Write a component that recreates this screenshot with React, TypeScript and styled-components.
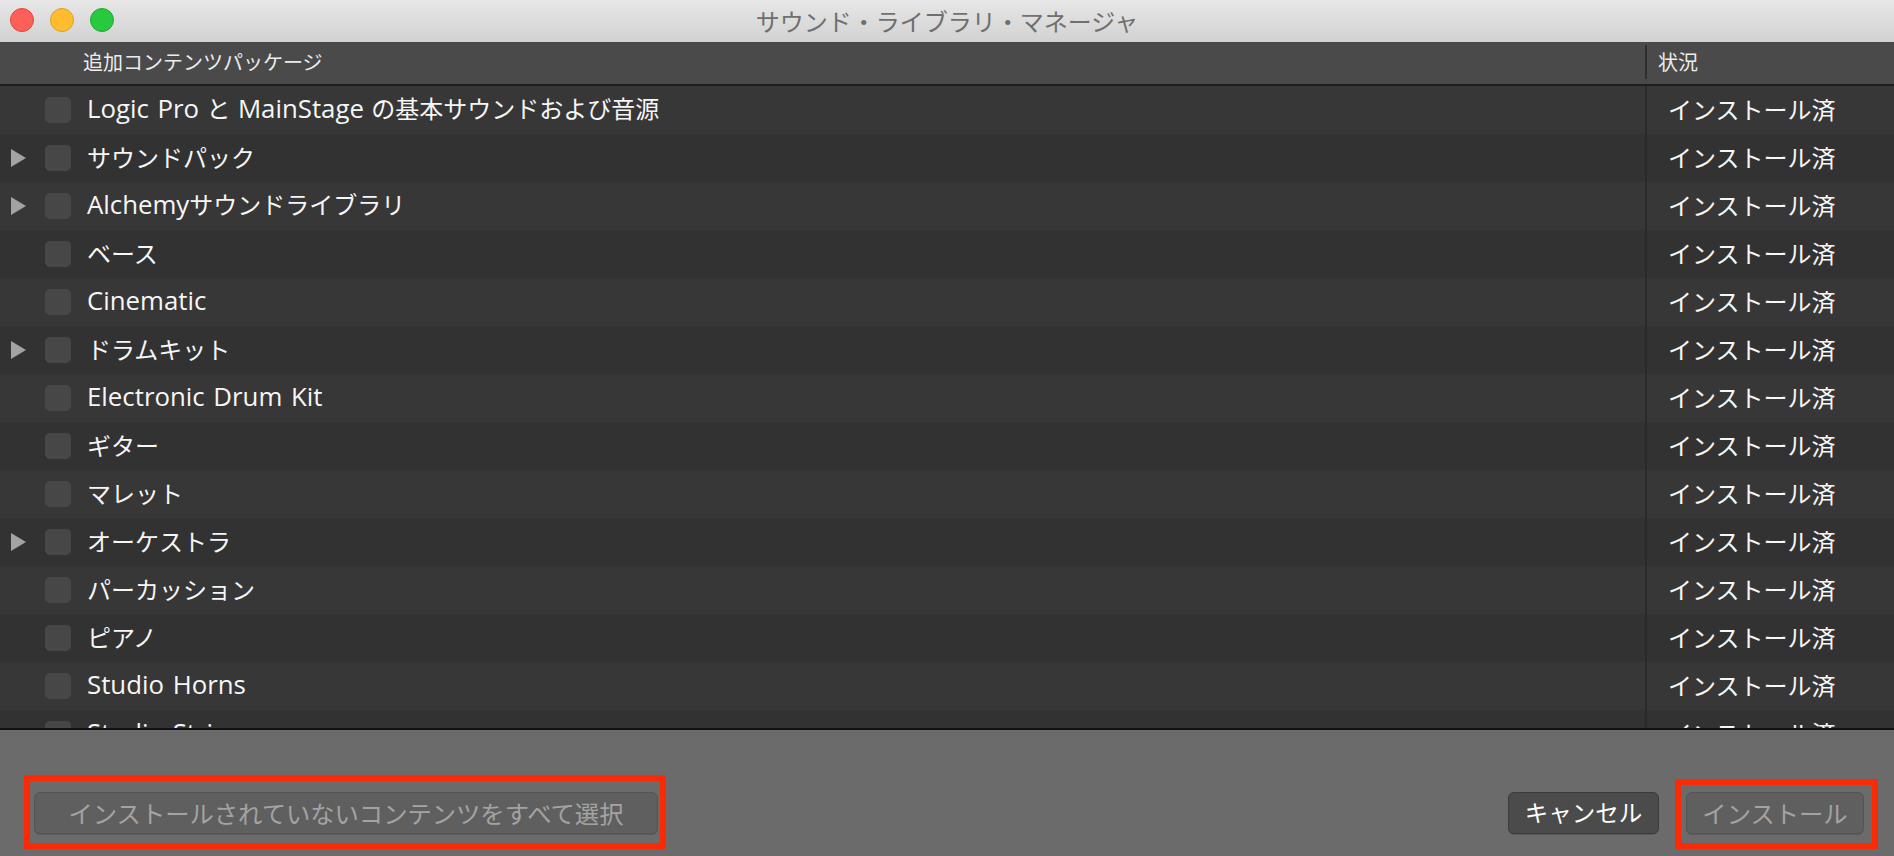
import React from "react";
import styled, { createGlobalStyle } from "styled-components";

const GlobalStyle = createGlobalStyle`
  html, body { margin: 0; padding: 0; background: #333; }
  body { font-family: "Open Sans", "Noto Sans CJK JP", sans-serif; }
  * { box-sizing: border-box; }
`;

const Window = styled.div`
  width: 1894px;
  height: 856px;
  display: flex;
  flex-direction: column;
  overflow: hidden;
  background: #333333;
`;

const TitleBar = styled.div`
  height: 42px;
  flex: 0 0 42px;
  display: flex;
  align-items: center;
  position: relative;
  background: linear-gradient(#e7e7e7, #d2d2d2);
`;

const Lights = styled.div`
  position: absolute;
  left: 10px;
  top: 8px;
  display: flex;
  gap: 16px;
`;

const Light = styled.div<{ $fill: string; $edge: string }>`
  width: 24px;
  height: 24px;
  border-radius: 50%;
  background: ${(p) => p.$fill};
  border: 1px solid ${(p) => p.$edge};
`;

const Title = styled.div`
  flex: 1;
  text-align: center;
  font-family: "Noto Sans CJK JP", sans-serif;
  font-size: 24px;
  color: #6f6f6f;
  line-height: 42px;
`;

const Header = styled.div`
  height: 44px;
  flex: 0 0 44px;
  display: grid;
  grid-template-columns: 1fr 249px;
  background: #4a4a4a;
  border-bottom: 2px solid #1e1e1e;
  color: #ececec;
  font-family: "Noto Sans CJK JP", sans-serif;
  font-size: 20px;
  padding-bottom: 3px;
`;

const HeaderCell = styled.div<{ $divider?: boolean; $pad: number }>`
  display: flex;
  align-items: center;
  padding-left: ${(p) => p.$pad}px;
  position: relative;
  ${(p) =>
    p.$divider
      ? `&::before { content: ""; position: absolute; left: 0; top: 3px; bottom: 2px; width: 2px; background: #2f2f2f; }`
      : ""}
`;

const List = styled.div`
  flex: 1;
  overflow: hidden;
  background: #333333;
`;

const Row = styled.div<{ $alt: boolean }>`
  height: 48px;
  display: grid;
  grid-template-columns: 1fr 249px;
  background: ${(p) => (p.$alt ? "#373737" : "#323232")};
  color: #f6f6f6;
  font-size: 24px;
`;

const NameCell = styled.div`
  display: flex;
  align-items: center;
  padding-left: 11px;
  padding-bottom: 4px;
  white-space: nowrap;
`;

const Label = styled.span`
  font-family: "Noto Sans CJK JP", sans-serif;
  white-space: pre;
  word-spacing: 2px;
`;

const Latin = styled.span`
  font-family: "Open Sans", sans-serif;
  font-size: 25.8px;
`;

const Disclosure = styled.div`
  width: 15px;
  height: 18px;
  flex: 0 0 15px;
  display: flex;
  align-items: center;
  margin-top: 4px;
`;

const Check = styled.div`
  width: 26px;
  height: 26px;
  flex: 0 0 26px;
  margin-left: 19px;
  margin-right: 16px;
  margin-top: 4px;
  border-radius: 5px;
  background: #474747;
`;

const StatusCell = styled.div`
  display: flex;
  align-items: center;
  padding-left: 21px;
  padding-bottom: 4px;
  border-left: 2px solid #2a2a2a;
  font-family: "Noto Sans CJK JP", sans-serif;
  white-space: nowrap;
`;

const Footer = styled.div`
  height: 128px;
  flex: 0 0 128px;
  background: #6b6b6b;
  border-top: 2px solid #111111;
  display: flex;
  align-items: flex-start;
  padding: 62px 30px 0 34px;
  gap: 27px;
`;

const Spacer = styled.div`
  flex: 1;
`;

const Marked = styled.div<{ $l: number; $r: number; $t: number; $b: number }>`
  position: relative;
  &::after {
    content: "";
    position: absolute;
    left: -${(p) => p.$l}px;
    right: -${(p) => p.$r}px;
    top: -${(p) => p.$t}px;
    bottom: -${(p) => p.$b}px;
    border: 6px solid #fb2a06;
    pointer-events: none;
  }
`;

const Button = styled.button<{ $width: number; $primary?: boolean }>`
  width: ${(p) => p.$width}px;
  height: 42px;
  border-radius: 6px;
  font-family: "Noto Sans CJK JP", sans-serif;
  font-size: ${(p) => (p.$primary ? "23.5px" : "24.3px")};
  padding: 0 0 2px;
  display: flex;
  align-items: center;
  justify-content: center;
  white-space: nowrap;
  background: ${(p) => (p.$primary ? "#4b4b4b" : "#5f5f5f")};
  border: 1px solid ${(p) => (p.$primary ? "#3b3b3b" : "#545454")};
  color: ${(p) => (p.$primary ? "#ffffff" : "#a3a3a3")};
  box-shadow: 0 1px 0 rgba(0, 0, 0, 0.15);
`;

const Triangle = () => (
  <svg width="15" height="18" viewBox="0 0 15 18">
    <polygon points="0,0 15,9 0,18" fill="#a3a3a3" />
  </svg>
);

const renderName = (name: string) =>
  name.split(/([A-Za-z0-9][A-Za-z0-9 ]*[A-Za-z0-9]|[A-Za-z0-9])/).map((part, i) =>
    /^[A-Za-z0-9]/.test(part) ? <Latin key={i}>{part}</Latin> : part
  );

const items: { name: string; expand?: boolean }[] = [
  { name: "Logic Pro と MainStage の基本サウンドおよび音源" },
  { name: "サウンドパック", expand: true },
  { name: "Alchemyサウンドライブラリ", expand: true },
  { name: "ベース" },
  { name: "Cinematic" },
  { name: "ドラムキット", expand: true },
  { name: "Electronic Drum Kit" },
  { name: "ギター" },
  { name: "マレット" },
  { name: "オーケストラ", expand: true },
  { name: "パーカッション" },
  { name: "ピアノ" },
  { name: "Studio Horns" },
  { name: "Studio Strings" },
];

export default function App() {
  return (
    <>
      <GlobalStyle />
      <Window>
        <TitleBar>
          <Lights>
            <Light $fill="#fe5f57" $edge="#e2463f" />
            <Light $fill="#febc2e" $edge="#dfa023" />
            <Light $fill="#28c840" $edge="#1dad2b" />
          </Lights>
          <Title>サウンド・ライブラリ・マネージャ</Title>
        </TitleBar>
        <Header>
          <HeaderCell $pad={83}>追加コンテンツパッケージ</HeaderCell>
          <HeaderCell $pad={13} $divider>
            状況
          </HeaderCell>
        </Header>
        <List>
          {items.map((it, i) => (
            <Row key={it.name} $alt={i % 2 === 0}>
              <NameCell>
                <Disclosure>{it.expand ? <Triangle /> : null}</Disclosure>
                <Check />
                <Label>{renderName(it.name)}</Label>
              </NameCell>
              <StatusCell>インストール済</StatusCell>
            </Row>
          ))}
        </List>
        <Footer>
          <Marked $l={10} $r={8} $t={17} $b={15}>
            <Button $width={624}>インストールされていないコンテンツをすべて選択</Button>
          </Marked>
          <Spacer />
          <Button $width={151} $primary>
            キャンセル
          </Button>
          <Marked $l={11} $r={14} $t={13} $b={15}>
            <Button $width={178}>インストール</Button>
          </Marked>
        </Footer>
      </Window>
    </>
  );
}
